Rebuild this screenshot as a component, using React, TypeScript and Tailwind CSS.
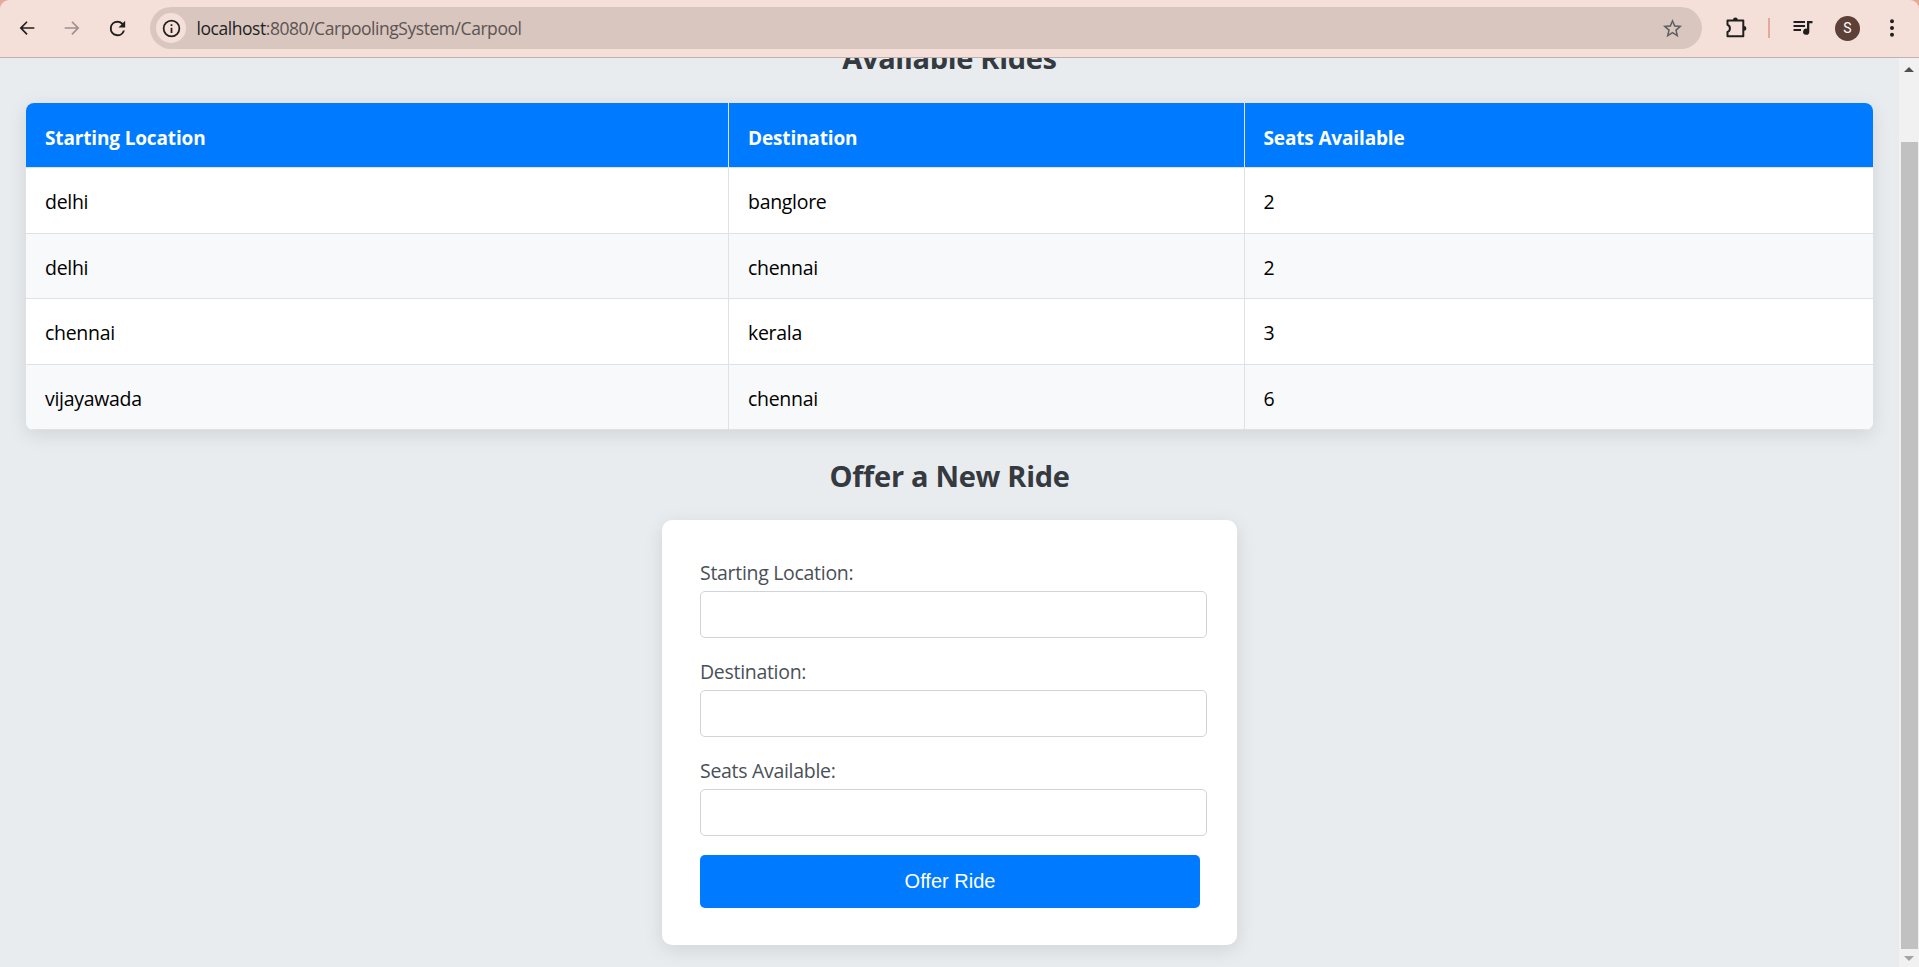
import type { ReactNode } from "react";

const rides = [
  { from: "delhi", to: "banglore", seats: 2 },
  { from: "delhi", to: "chennai", seats: 2 },
  { from: "chennai", to: "kerala", seats: 3 },
  { from: "vijayawada", to: "chennai", seats: 6 },
];

const rowStyles = [
  "h-[66px] bg-white *:pt-[3px]",
  "h-[65px] bg-[#f8f9fa] *:pt-1",
  "h-[66px] bg-white *:pt-[3px]",
  "h-[65px] bg-[#f8f9fa] *:pt-1",
];

function Icon({ d, className }: { d: string; className: string }) {
  return (
    <svg viewBox="0 0 24 24" fill="currentColor" className={"shrink-0 " + className}>
      <path d={d} />
    </svg>
  );
}

function Toolbar() {
  return (
    <div className="bg-[#e5a99b]">
      <header className="flex h-[58px] items-start rounded-t-[9px] border-b border-[#c2b2ad] bg-[#f5e0d9] text-[#1f1f1f]">
        <div className="flex h-14 w-[150px] shrink-0 items-center pl-4">
          <Icon className="h-[22px] w-[22px]" d="M20 11.1H7.4l5.3-5.3L11.4 4.5 4 12l7.4 7.5 1.3-1.3-5.3-5.3H20z" />
          <Icon className="ml-[23px] h-[22px] w-[22px] text-[#9d908d]" d="M4 11.1h12.6l-5.3-5.3 1.3-1.3L20 12l-7.4 7.5-1.3-1.3 5.3-5.3H4z" />
          <Icon
            className="ml-[23px] h-[23px] w-[23px]"
            d="M17.65 6.35A7.95 7.95 0 0 0 12 4a8 8 0 1 0 7.73 10h-2.08A6 6 0 1 1 12 6c1.66 0 3.14.69 4.22 1.78L13 11h7V4l-2.350 2.350z"
          />
        </div>
        <div className="mt-[7px] flex h-[42px] w-[1552px] shrink-0 items-center rounded-full bg-[#d8c6bf] pr-[18px] pl-1.5">
          <div className="flex size-[30px] items-center justify-center rounded-full bg-[#f5e0d9]">
            <Icon
              className="size-[21px]"
              d="M11 7h2v2h-2zm0 4h2v6h-2zm1-9a10 10 0 1 0 0 20 10 10 0 0 0 0-20zm0 18a8 8 0 1 1 0-16 8 8 0 0 1 0 16z"
            />
          </div>
          <div className="ml-[10.5px] flex-1 font-['Open_Sans',sans-serif] text-[17.5px] leading-6 tracking-[-0.45px] text-[#5c5452]">
            <span className="text-[#1f1f1f]">localhost</span>:8080/CarpoolingSystem/Carpool
          </div>
          <Icon
            className="size-[23px] text-[#5f6063]"
            d="M22 9.24l-7.19-.62L12 2 9.19 8.63 2 9.24l5.46 4.73L5.82 21 12 17.27 18.18 21l-1.63-7.03L22 9.24zM12 15.4l-3.76 2.27 1-4.28-3.32-2.88 4.38-.38L12 6.1l1.71 4.04 4.38.38-3.32 2.88 1 4.28L12 15.4z"
          />
        </div>
        <div className="flex h-14 flex-1 items-center pl-[22px]">
          <svg viewBox="0 0 24 24" className="size-6 shrink-0" fill="none" stroke="currentColor" strokeWidth="2" strokeLinejoin="round">
            <path d="M3.500 4.500h15.800v15.800H3.500v-4.300c1.500-.6 2.400-1.800 2.400-3.600S5 9.400 3.500 8.800z" />
            <path d="M9 4a2.400 2.400 0 0 1 4.800 0zM20 10a2.400 2.400 0 0 1 0 4.800z" fill="currentColor" stroke="none" />
          </svg>
          <div className="ml-5 h-5 w-0.5 bg-[#e5a99b]" />
          <svg viewBox="0 0 20 16" className="ml-[23px] h-4 w-5 shrink-0" fill="currentColor">
            <path d="M0.500 1h11.500v2H.5zM.5 5h11.500v2H.5zM.5 9h7.500v2H.5z" />
            <path d="M14 1h5.500v2.200h-3.200v8.500a3.100 3.100 0 1 1-2.300-3z" />
          </svg>
          <div className="ml-[22px] flex size-[25px] items-center justify-center rounded-full bg-[#5d4037] font-['Roboto',sans-serif] text-[14px] text-white">
            S
          </div>
          <Icon
            className="ml-5 size-6"
            d="M12 7.200a2 2 0 1 0 0-4 2 2 0 0 0 0 4zm0 6.800a2 2 0 1 0 0-4 2 2 0 0 0 0 4zm0 6.800a2 2 0 1 0 0-4 2 2 0 0 0 0 4z"
          />
        </div>
      </header>
    </div>
  );
}

function Heading({ children }: { children: ReactNode }) {
  return (
    <h2 className="text-center text-[29px] leading-10 font-bold tracking-[-0.3px] text-[#343a40]">{children}</h2>
  );
}

function RidesTable() {
  return (
    <table className="mt-[25px] ml-[26px] w-[1847px] table-fixed border-separate border-spacing-0 overflow-hidden rounded-[8px] bg-white text-left text-[19.5px] leading-[30px] tracking-[-0.3px] shadow-[0_5px_19px_rgba(0,0,0,0.1)]">
      <colgroup>
        <col className="w-[703px]" />
        <col className="w-[516px]" />
        <col className="w-[628px]" />
      </colgroup>
      <thead>
        <tr className="h-[65px] bg-[#007bff] text-[19px] tracking-[-0.15px] text-white">
          <th className="border-r border-b border-[#dee2e6] pt-[5px] pl-[19px] font-bold">Starting Location</th>
          <th className="border-r border-b border-[#dee2e6] pt-[5px] pl-[19px] font-bold">Destination</th>
          <th className="border-b border-[#dee2e6] pt-[5px] pl-[18.5px] font-bold">Seats Available</th>
        </tr>
      </thead>
      <tbody>
        {rides.map((ride, i) => (
          <tr key={i} className={rowStyles[i]}>
            <td className="border-r border-b border-[#dee2e6] pl-[19px]">{ride.from}</td>
            <td className="border-r border-b border-[#dee2e6] pl-[19px]">{ride.to}</td>
            <td className="border-b border-[#dee2e6] pl-[18.5px]">{ride.seats}</td>
          </tr>
        ))}
      </tbody>
    </table>
  );
}

function Field({ label }: { label: string }) {
  return (
    <label className="mb-5 block h-[79px] text-[19.5px] tracking-[-0.3px] text-[#495057]">
      <span className="block h-8 leading-7">{label}</span>
      <input className="block h-[47px] w-[507px] rounded-[5px] border border-[#ced4da] bg-white px-3 outline-none" />
    </label>
  );
}

function OfferForm() {
  return (
    <form className="mx-auto mt-[24px] h-[425px] w-[575px] rounded-[10px] bg-white pt-[39px] pl-[38px] shadow-[0_5px_19px_rgba(0,0,0,0.1)]">
      <Field label="Starting Location:" />
      <Field label="Destination:" />
      <Field label="Seats Available:" />
      <button
        type="button"
        className="-mt-px block h-[53px] w-[500px] rounded-[5px] bg-[#007bff] pb-0.5 font-['Liberation_Sans',sans-serif] text-[20px] text-white"
      >
        Offer Ride
      </button>
    </form>
  );
}

function Scrollbar() {
  return (
    <div className="flex w-5 shrink-0 flex-col items-center bg-[#f1f1f1] pt-[9px] pb-1.5">
      <svg viewBox="0 0 10 5" className="h-[5px] w-2.5 text-[#505050]" fill="currentColor">
        <path d="M5 0l5 5H0z" />
      </svg>
      <div className="mt-[70px] h-[807px] w-[17px] bg-[#c1c1c1]" />
      <svg viewBox="0 0 10 5" className="mt-[7px] h-[5px] w-2.5 text-[#a3a3a3]" fill="currentColor">
        <path d="M0 0h10L5 5z" />
      </svg>
    </div>
  );
}

export default function App() {
  return (
    <div className="flex h-[967px] w-[1919px] flex-col overflow-hidden">
      <Toolbar />
      <div className="flex min-h-0 flex-1 bg-[#e9ecef] font-['Open_Sans',sans-serif] text-black">
        <main className="min-w-0 flex-1 overflow-hidden">
          <div className="-mt-[20px]">
            <Heading>Available Rides</Heading>
            <RidesTable />
            <div className="mt-[26px]">
              <Heading>Offer a New Ride</Heading>
            </div>
            <OfferForm />
          </div>
        </main>
        <Scrollbar />
      </div>
    </div>
  );
}
